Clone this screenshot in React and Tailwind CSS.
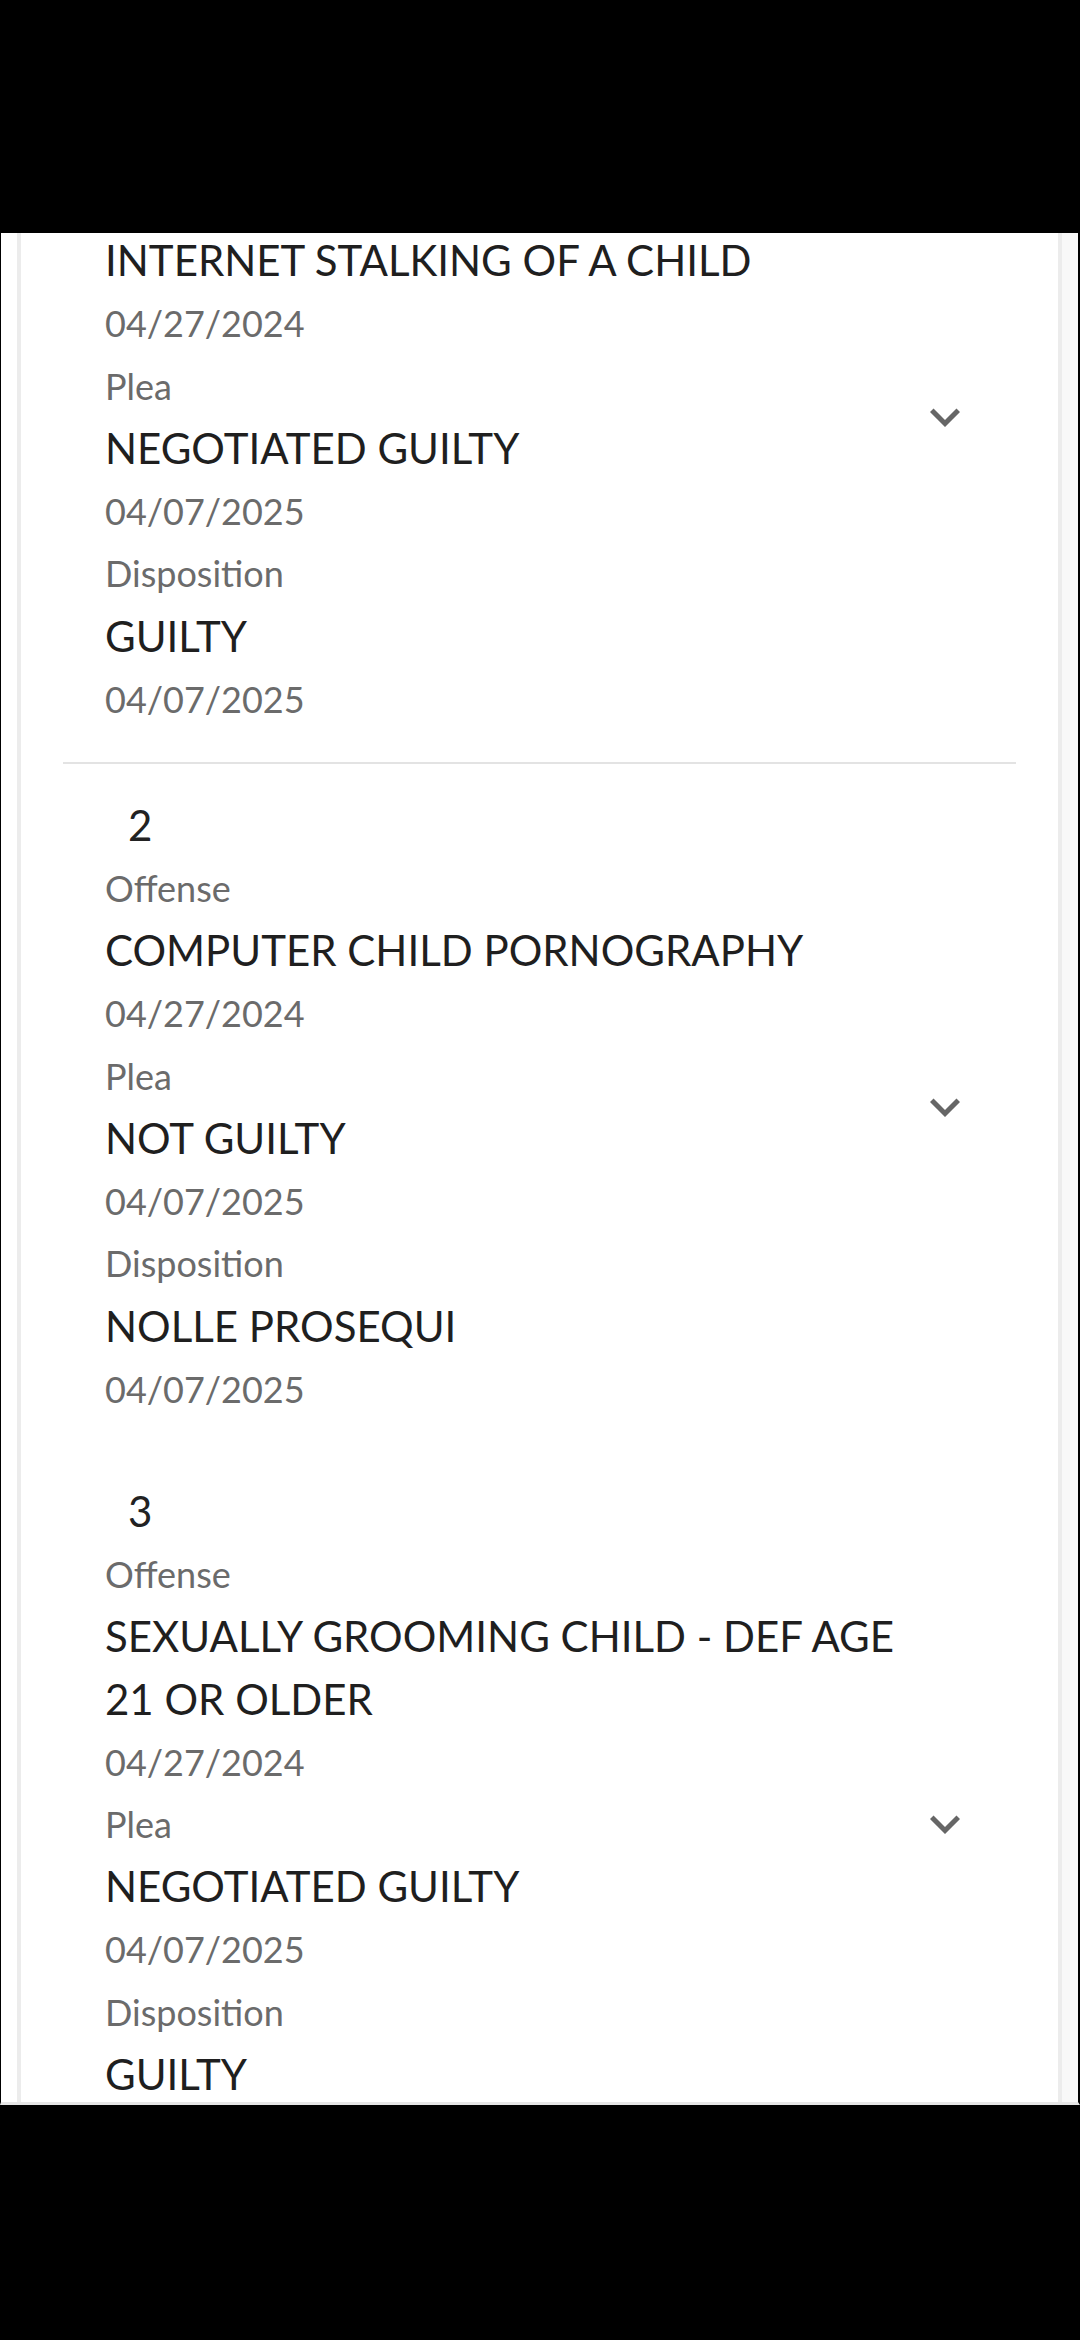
import React from "react";

const FONT = { fontFamily: "Lato, 'Open Sans', sans-serif" };

function Chevron() {
  return (
    <svg width="60" height="60" viewBox="0 0 24 24" aria-hidden="true">
      <path d="M16.59 8.59L12 13.17 7.41 8.59 6 10l6 6 6-6z" fill="#666666" />
    </svg>
  );
}

function Label({ children }) {
  return (
    <div className="h-[62.6px] flex items-center text-[36px] text-[#6b6b6b]">{children}</div>
  );
}

function Value({ children }) {
  return (
    <div className="min-h-[62.6px] flex items-center text-[42px] leading-[62.6px] text-[#1f1f1f]">{children}</div>
  );
}

function Spacer() {
  return <div className="h-[62.6px]" />;
}

function Group({ n, offense, plea, pleaDate, disp, dispDate, offenseDate, first, last, divider, pad }) {
  return (
    <>
      <div className={`flex items-center pl-[42px] pr-[41px] ${pad}`}>
        <div className="flex-1 min-w-0">
          {first ? (
            <Spacer />
          ) : (
            <div className="h-[62.6px] flex items-center pl-[23px] text-[42px] text-[#222222]">{n}</div>
          )}
          {first ? <Spacer /> : <Label>Offense</Label>}
          <Value>{offense}</Value>
          <Label>{offenseDate}</Label>
          <Label>Plea</Label>
          <Value>{plea}</Value>
          <Label>{pleaDate}</Label>
          <Label>Disposition</Label>
          <Value>{disp}</Value>
          {last ? <Spacer /> : <Label>{dispDate}</Label>}
        </div>
        <div className="w-[60px] h-[60px] shrink-0">
          <Chevron />
        </div>
      </div>
      <div className={`h-[2px] ${divider ? "bg-[#e3e3e3]" : "bg-white"}`} />
    </>
  );
}

export default function App() {
  return (
    <div className="w-[1080px] h-[2340px] bg-black flex flex-col" style={FONT}>
      <div className="h-[233px] shrink-0 bg-black" />
      <div className="h-[1872px] shrink-0 flex bg-white border-l border-black border-r-2 border-b-[3px] border-b-[#e6e6e6] overflow-hidden">
        <div className="w-[16px] shrink-0 bg-white" />
        <div className="w-[1045px] shrink-0 border-x-4 border-[#ececec] bg-white overflow-hidden">
          <div className="mx-[42px]">
            <Group
              first
              divider
              pad="-mt-[159px] pt-[30px] pb-[32px]"
              n="1"
              offense="INTERNET STALKING OF A CHILD"
              offenseDate="04/27/2024"
              plea="NEGOTIATED GUILTY"
              pleaDate="04/07/2025"
              disp="GUILTY"
              dispDate="04/07/2025"
            />
            <Group
              pad="pt-[30px] pb-[28px]"
              n="2"
              offense="COMPUTER CHILD PORNOGRAPHY"
              offenseDate="04/27/2024"
              plea="NOT GUILTY"
              pleaDate="04/07/2025"
              disp="NOLLE PROSEQUI"
              dispDate="04/07/2025"
            />
            <Group
              last
              pad="pt-[30px] pb-[30px]"
              n="3"
              offense="SEXUALLY GROOMING CHILD - DEF AGE 21 OR OLDER"
              offenseDate="04/27/2024"
              plea="NEGOTIATED GUILTY"
              pleaDate="04/07/2025"
              disp="GUILTY"
              dispDate="04/07/2025"
            />
          </div>
        </div>
        <div className="flex-1 bg-[#f8f8f8]" />
      </div>
      <div className="flex-1 bg-black" />
    </div>
  );
}
